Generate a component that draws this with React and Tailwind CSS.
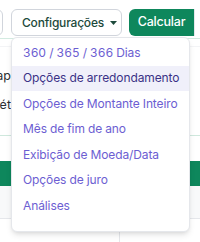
import { useState } from 'react';

const opcoes = [
  '360 / 365 / 366 Dias',
  'Opções de arredondamento',
  'Opções de Montante Inteiro',
  'Mês de fim de ano',
  'Exibição de Moeda/Data',
  'Opções de juro',
  'Análises',
];

export default function App() {
  const [ativo] = useState(1);

  return (
    <div className="relative w-[200px] h-[242px] overflow-hidden bg-white font-['Inter',sans-serif]">
      {/* barra superior */}
      <div className="flex items-center pt-[7px] h-[38px]">
        <button className="-ml-[37px] w-[40px] h-[27px] rounded-md border border-gray-300 bg-white shrink-0"></button>
        <button className="ml-[8px] w-[111px] h-[27px] rounded-md border border-gray-300 bg-white flex items-center pl-[10px] gap-[6px] text-[12px] tracking-[-0.2px] font-medium text-[#1d4a3b] shrink-0">
          Configurações
          <svg width="7" height="4" viewBox="0 0 7 4"><path d="M0 0h7L3.5 4z" fill="#1d4a3b" /></svg>
        </button>
        <button className="ml-[7px] w-[65px] h-[27px] rounded-l-md bg-[#0e875c] text-white text-[12.5px] tracking-[-0.2px] font-medium shrink-0">
          Calcular
        </button>
        <div className="w-[10px] h-[27px] border-l border-gray-200 shrink-0"></div>
      </div>

      {/* tabela de fundo */}
      <div className="border-t border-[#d3ebe1]">
        <div className="h-[8px] border-b border-gray-100"></div>
        <div className="h-[15px]"></div>
        <div className="h-[29px] flex items-center text-[12.5px] text-[#2b2f33]">
          <div className="-ml-[25px] w-[36px] text-right">Cap</div>
        </div>
        <div className="h-[29px] flex items-center text-[12.5px] text-[#2b2f33]">
          <div className="-ml-[25px] w-[36px] text-right">Mét</div>
        </div>
        <div className="h-[15px]"></div>
        <div className="h-[26px] border-t border-[#cfe8dd]"></div>
        <div className="h-[25px] bg-[#0e875c]"></div>
        <div className="h-[33px] bg-[#f8f9fa] flex border-b border-gray-200">
          <div className="w-[37px] border-r border-gray-200"></div>
        </div>
        <div className="h-[30px] flex">
          <div className="w-[120px] border-r border-gray-200"></div>
        </div>
      </div>

      {/* menu suspenso */}
      <div className="absolute left-[11px] top-[37px] w-[179px] h-[195px] rounded-md border border-gray-200 bg-white shadow-md pt-[2px]">
        {opcoes.map((item, i) => (
          <div
            key={item}
            className={`h-[25.5px] flex items-center px-[11px] text-[12px] tracking-[-0.1px] tabular-nums whitespace-nowrap ${
              i === ativo ? 'bg-[#f0f0fa] text-[#3b3287]' : 'text-[#6c5ed2]'
            }`}
          >
            {item}
          </div>
        ))}
      </div>
    </div>
  );
}
